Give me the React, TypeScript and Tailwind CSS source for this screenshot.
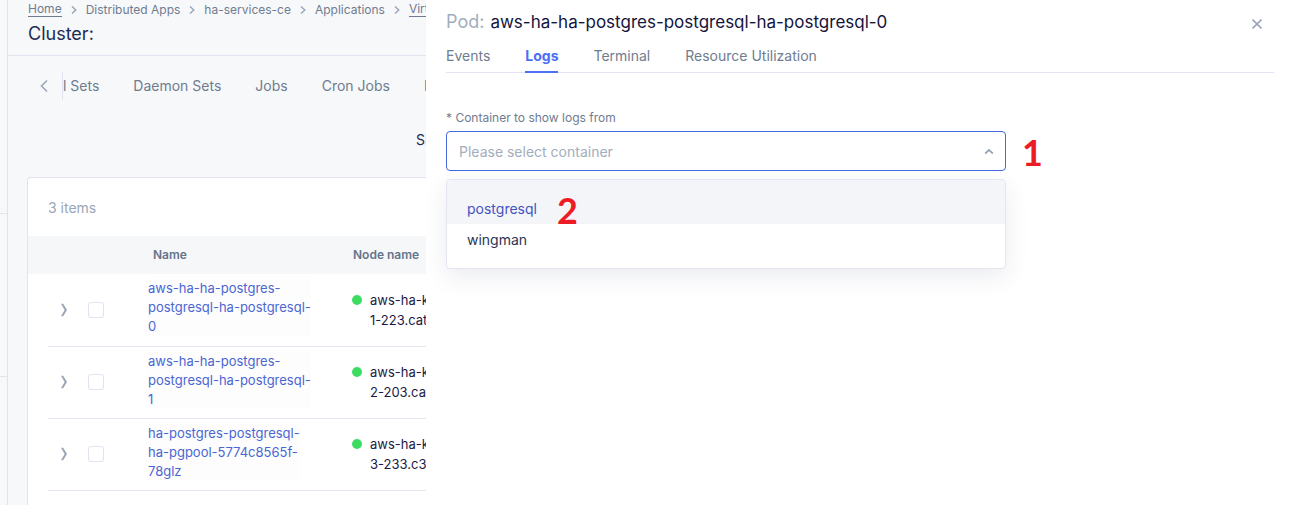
import React from "react";

const crumbs = [
  { label: "Home", link: true },
  { label: "Distributed Apps" },
  { label: "ha-services-ce" },
  { label: "Applications" },
  { label: "Virtual", link: true },
];

const workloads = ["l Sets", "Daemon Sets", "Jobs", "Cron Jobs", "Pods"];

const pods = [
  { name: ["aws-ha-ha-postgres-", "postgresql-ha-postgresql-", "0"], node: ["aws-ha-k", "1-223.cat"] },
  { name: ["aws-ha-ha-postgres-", "postgresql-ha-postgresql-", "1"], node: ["aws-ha-k", "2-203.cat"] },
  { name: ["ha-postgres-postgresql-", "ha-pgpool-5774c8565f-", "78glz"], node: ["aws-ha-k", "3-233.c3"] },
];

const drawerTabs = ["Events", "Logs", "Terminal", "Resource Utilization"];

function Breadcrumbs() {
  return (
    <nav aria-label="Breadcrumb">
      <ol className="flex items-center text-xs leading-4 whitespace-nowrap text-[#6f7c90]">
        {crumbs.map((c, i) => (
          <li key={c.label} className="flex items-center">
            {i > 0 && (
              <svg className="mx-2 h-2 w-2" viewBox="0 0 8 8" fill="none" stroke="#9aa4b5" strokeWidth="1.4" aria-hidden="true">
                <path d="M2 0.5 5.8 4 2 7.5" />
              </svg>
            )}
            <a href="#" className={c.link ? "border-b border-[#6f7c90] leading-[14px]" : "leading-[14px]"}>
              {c.label}
            </a>
          </li>
        ))}
      </ol>
    </nav>
  );
}

function PodTable() {
  return (
    <table className="w-[640px] table-fixed border-collapse text-left">
      <colgroup>
        <col className="w-5" />
        <col className="w-8" />
        <col className="w-[68px]" />
        <col className="w-[200px]" />
        <col />
      </colgroup>
      <thead>
        <tr className="h-[38px] bg-[#f6f7f9] text-xs text-[#65748b]">
          <td />
          <td />
          <td />
          <th scope="col" className="pl-[5px] font-semibold">Name</th>
          <th scope="col" className="pl-[5px] font-semibold">Node name</th>
        </tr>
      </thead>
      <tbody>
        {pods.map((p, i) => (
          <tr key={i} className="h-[72px]">
            <td />
            <td className="border-b border-[#e3e5f0]">
              <button type="button" aria-label="Expand row" className="ml-3 block h-4 w-2">
                <svg viewBox="0 0 8 16" fill="#9aa5b8" aria-hidden="true">
                  <path d="M1 1.8h2.2L7 8l-3.8 6.2H1L4.6 8Z" />
                </svg>
              </button>
            </td>
            <td className="border-b border-[#e3e5f0]">
              <input
                type="checkbox"
                aria-label={"Select " + p.name.join("")}
                className="ml-2 block h-4 w-4 appearance-none rounded-[3px] border border-[#e1e2f2] bg-white"
              />
            </td>
            <td className="border-b border-[#e3e5f0] pb-[3px]">
              <a href="#" className="inline-block bg-[#fdfdfd] text-[13px] leading-[19px] text-[#4a66d3]">
                {p.name.map((l) => (
                  <span key={l} className="block">{l}</span>
                ))}
              </a>
            </td>
            <td className="border-b border-[#e3e5f0]">
              <div className="flex gap-2 pl-1 text-[13px] leading-5 whitespace-nowrap text-[#1b1b45]">
                <span className="mt-[5px] h-[10px] w-[10px] rounded-full bg-[#3ddc61]" />
                <span>
                  {p.node.map((l) => (
                    <span key={l} className="block">{l}</span>
                  ))}
                </span>
              </div>
            </td>
          </tr>
        ))}
      </tbody>
    </table>
  );
}

function StepNumber({ n }: { n: number }) {
  return <span className="pt-[2px] font-[Lato] text-4xl leading-none font-bold text-[#ed1c24]">{n}</span>;
}

function ContainerField() {
  return (
    <div className="mt-[37px]">
      <label htmlFor="container" className="block text-xs leading-4 text-[#6f7c90]">
        * Container to show logs from
      </label>
      <div className="mt-[5px] flex items-center gap-4">
        <div className="relative w-full max-w-[560px]">
          <select
            id="container"
            defaultValue=""
            className="block h-10 w-full appearance-none rounded border border-[#4468e0] bg-white px-3 pt-[2px] text-sm text-[#a3adbd] outline-none"
          >
            <option value="">Please select container</option>
            <option value="postgresql">postgresql</option>
            <option value="wingman">wingman</option>
          </select>
          <svg className="pointer-events-none absolute top-4 right-3 h-2 w-[10px]" viewBox="0 0 10 8" fill="none" stroke="#9aa5b8" strokeWidth="1.7" aria-hidden="true">
            <path d="M1.2 6.5 5 3 8.8 6.5" />
          </svg>
          <ul
            role="listbox"
            aria-label="Containers"
            className="absolute top-12 left-0 w-full overflow-hidden rounded border border-[#e3e5f0] bg-white pb-3 text-sm text-[#2b3554] shadow-[0_8px_24px_rgba(30,40,90,0.09)]"
          >
            <li role="option" aria-selected="true" className="flex h-11 items-center gap-5 bg-[#f4f5f8] px-5 pt-[14px] text-[#4353c0]">
              postgresql
              <StepNumber n={2} />
            </li>
            <li role="option" aria-selected="false" className="flex h-8 items-center px-5">wingman</li>
          </ul>
        </div>
        <StepNumber n={1} />
      </div>
    </div>
  );
}

export default function App() {
  return (
    <div className="flex h-screen overflow-hidden bg-[#f7f8fa] font-[Inter,sans-serif]">
      <div className="flex w-[426px] shrink-0 overflow-hidden">
        <aside className="flex w-2 shrink-0 flex-col border-r border-[#e1e4ee]">
          <div className="h-[214px] border-b border-[#e1e4ee]" />
          <div className="h-[163px] border-b border-[#e1e4ee]" />
        </aside>
        <main className="flex min-w-0 flex-1 flex-col">
          <header className="border-b border-[#e1e4ee] pt-[2px] pb-[9px] pl-5">
            <Breadcrumbs />
            <h1 className="mt-[5px] text-lg leading-6 text-[#1d2b54]">Cluster:</h1>
          </header>
          <div className="mt-4 flex h-7 items-center pl-8">
            <button type="button" aria-label="Previous tabs" className="h-[14px] w-2 shrink-0">
              <svg viewBox="0 0 8 14" fill="none" stroke="#9aa5b8" strokeWidth="1.6" aria-hidden="true">
                <path d="M7 1.5 1.5 7 7 12.5" />
              </svg>
            </button>
            <nav className="ml-[14px] flex gap-[34px] border-l border-[#e1e4ee] text-sm leading-7 whitespace-nowrap text-[#6f7c90]">
              {workloads.map((w) => (
                <a key={w} href="#" className="-ml-px pl-px">{w}</a>
              ))}
            </nav>
          </div>
          <p className="mt-[30px] pl-[408px] text-sm leading-5 whitespace-nowrap text-[#1d2b54]">Size</p>
          <section className="mt-[27px] ml-[19px] flex-1 overflow-hidden rounded-tl border-t border-l border-[#e1e4ee] bg-white">
            <p className="pt-5 pb-[18px] pl-5 text-sm leading-5 text-[#9aa5b8]">3 items</p>
            <PodTable />
          </section>
        </main>
      </div>

      <section aria-label="Pod details" className="min-w-0 flex-1 bg-white pt-2 pr-[15px] pl-5">
        <div className="flex items-center justify-between pr-3">
          <h2 className="flex gap-[6px] text-lg leading-7 text-[#a3adbd]">
            Pod: <span className="text-[17px] text-[#14143c]">aws-ha-ha-postgres-postgresql-ha-postgresql-0</span>
          </h2>
          <button type="button" aria-label="Close" className="mt-[3px] h-[10px] w-[10px]">
            <svg viewBox="0 0 10 10" fill="none" stroke="#9aa5b8" strokeWidth="1.6" aria-hidden="true">
              <path d="M0.5 0.5 9.5 9.5M9.5 0.5 0.5 9.5" />
            </svg>
          </button>
        </div>
        <div role="tablist" className="mt-[10px] flex h-[27px] gap-[35px] border-b border-[#e3e3f3] text-sm leading-5 text-[#6f7c90]">
          {drawerTabs.map((t) => (
            <button
              key={t}
              type="button"
              role="tab"
              aria-selected={t === "Logs"}
              className={
                t === "Logs"
                  ? "h-[27px] border-b-2 border-[#4c6ff7] pb-[5px] font-bold text-[#4c6ff7]"
                  : "h-[27px] border-b-2 border-transparent pb-[5px]"
              }
            >
              {t}
            </button>
          ))}
        </div>
        <ContainerField />
      </section>
    </div>
  );
}
